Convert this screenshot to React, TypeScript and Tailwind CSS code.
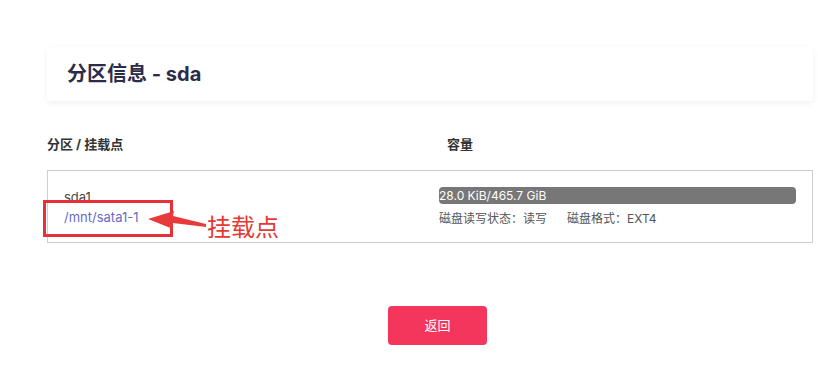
import React from 'react';

const font = { fontFamily: 'Inter, "Noto Sans CJK SC", sans-serif' };

export default function App() {
  return (
    <div className="relative w-[818px] h-[387px] bg-white overflow-hidden" style={font}>
      <div className="pt-[47px] pl-[47px] w-[813px]">
        {/* header card */}
        <div className="h-[54px] flex items-center pl-[20px] bg-white shadow-[0_2px_6px_rgba(0,0,0,0.06)] rounded-[2px]">
          <h1 className="text-[20px] font-bold text-[#2c2c48] leading-none">分区信息 - sda</h1>
        </div>

        {/* column headers */}
        <div className="flex mt-[36px] h-[16px] items-center text-[13px] font-bold text-[#333]">
          <div className="w-[400px]">分区 / 挂载点</div>
          <div>容量</div>
        </div>

        {/* partition row */}
        <div className="mt-[17px] h-[73px] border border-[#cfcfcf] flex items-center">
          <div className="w-[391px] pl-[16px] text-[13px] leading-[20px]">
            <div className="text-[#444]">sda1</div>
            <div className="text-[#6a6ac4]">/mnt/sata1-1</div>
          </div>
          <div className="flex-1 pr-[16px]">
            <div className="h-[17px] rounded-[4px] bg-[#777] text-white text-[12px] leading-[17px] overflow-hidden whitespace-nowrap">
              28.0 KiB/465.7 GiB
            </div>
            <div className="mt-[7px] text-[12px] text-[#555] leading-[16px] flex gap-[20px]">
              <span>磁盘读写状态：读写</span>
              <span>磁盘格式：EXT4</span>
            </div>
          </div>
        </div>

        {/* back button */}
        <div className="w-[781px] flex justify-center mt-[63px]">
          <button className="w-[99px] h-[39px] rounded-[4px] bg-[#f5365c] text-white text-[13px]">返回</button>
        </div>
      </div>

      {/* annotation overlay */}
      <div className="absolute left-[43px] top-[200px] w-[130px] h-[37px] border-[3px] border-[#e8303a]" />
      <svg className="absolute left-0 top-0" width="818" height="387">
        <polygon points="148,219 174,211 173,216 206,224 206,227 173,223 173,229" fill="#e83a3a" />
      </svg>
      <div className="absolute left-[207px] top-[212px] text-[24px] leading-[32px] text-[#e53935]">挂载点</div>
    </div>
  );
}
